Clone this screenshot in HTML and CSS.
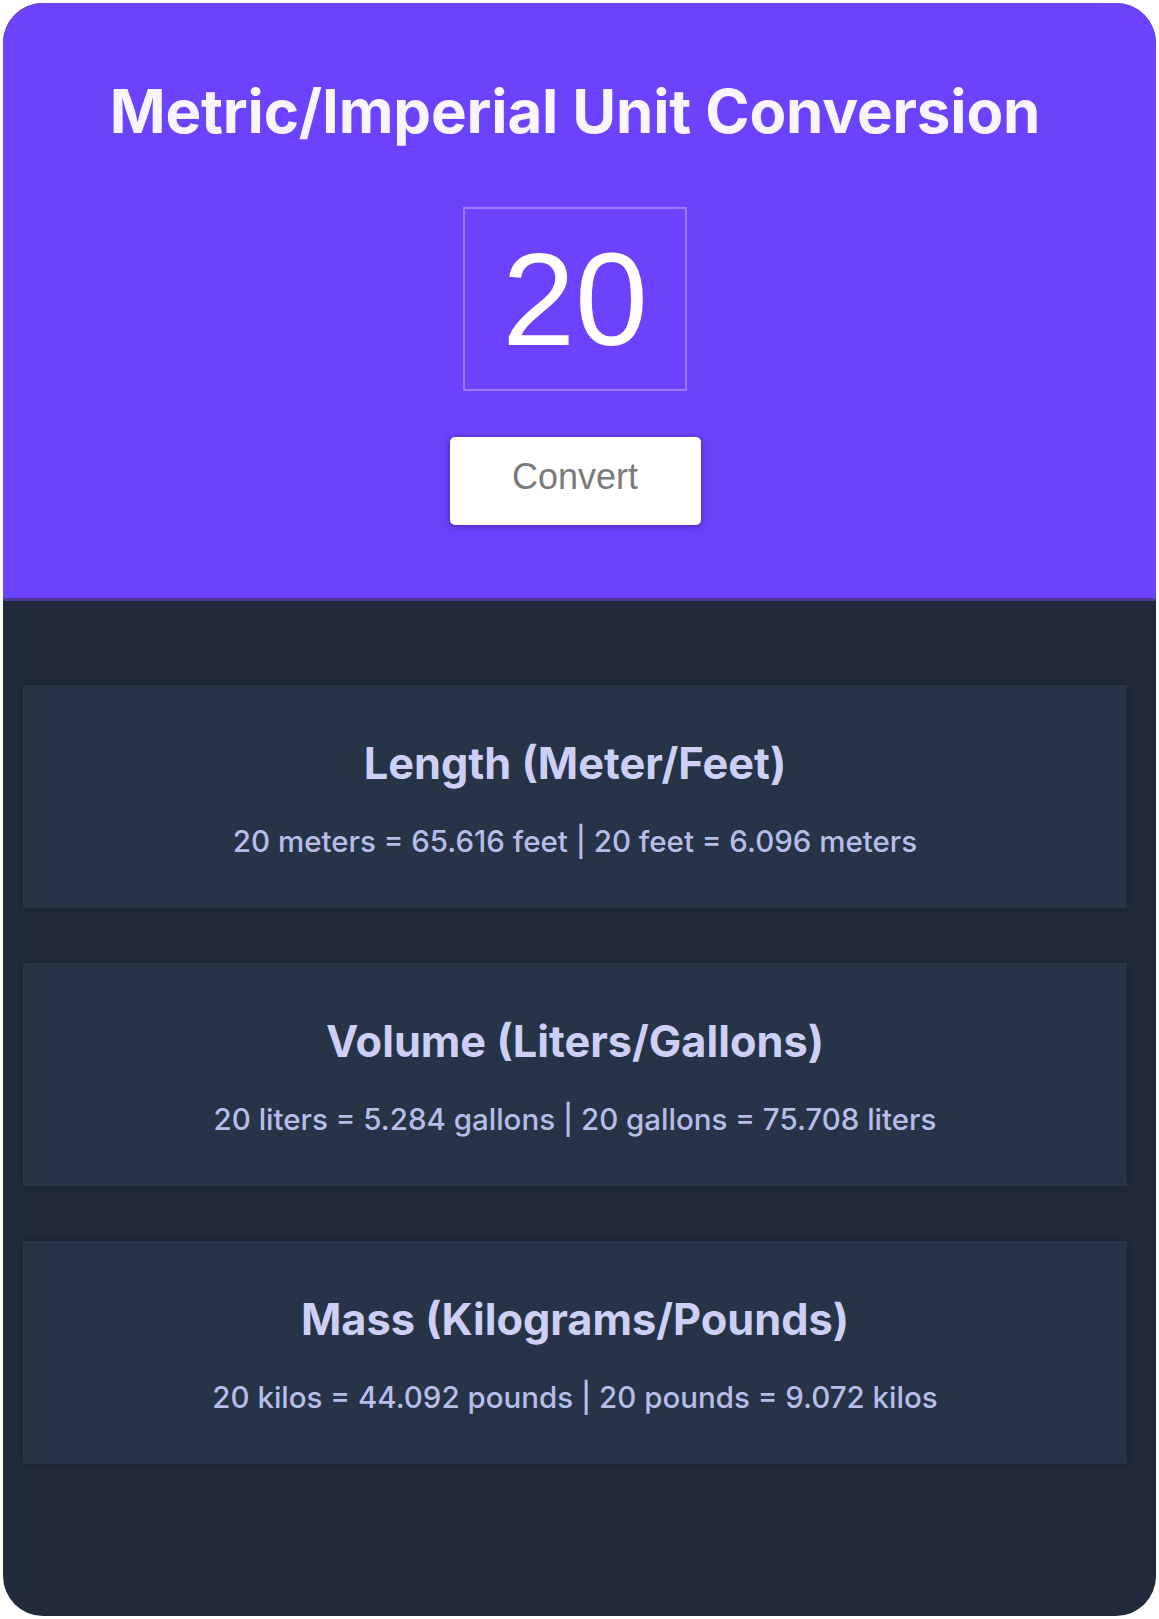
FILE: index.html
```html
<!DOCTYPE html>
<html lang="en">
<head>
<meta charset="utf-8">
<title>Metric/Imperial Unit Conversion</title>
<link rel="stylesheet" href="styles.css">
</head>
<body>
  <div class="app">
    <header class="hero">
      <h1 class="hero-title">Metric/Imperial Unit Conversion</h1>
      <input class="amount" type="text" value="20">
      <button class="convert-btn" type="button">Convert</button>
    </header>
    <main class="results">
      <section class="result-card">
        <h2 class="result-title">Length (Meter/Feet)</h2>
        <p class="result-text">20 meters = 65.616 feet | 20 feet = 6.096 meters</p>
      </section>
      <section class="result-card">
        <h2 class="result-title">Volume (Liters/Gallons)</h2>
        <p class="result-text">20 liters = 5.284 gallons | 20 gallons = 75.708 liters</p>
      </section>
      <section class="result-card">
        <h2 class="result-title">Mass (Kilograms/Pounds)</h2>
        <p class="result-text">20 kilos = 44.092 pounds | 20 pounds = 9.072 kilos</p>
      </section>
    </main>
  </div>
</body>
</html>
```

FILE: styles.css
```css
* { box-sizing: border-box; }

html, body {
  margin: 0;
  padding: 0;
  background: #ffffff;
}

body {
  padding: 3px;
  font-family: Inter, "Noto Sans", "DejaVu Sans", sans-serif;
}

.app {
  width: 1153px;
  height: 1613px;
  border-radius: 40px;
  overflow: hidden;
  background: #212a3a;
  display: flex;
  flex-direction: column;
}

.hero {
  background: #6b43fd;
  border-bottom: 3px solid #4b3a9a;
  padding: 72px 9px 73px 0;
  display: flex;
  flex-direction: column;
  align-items: center;
}

.hero-title {
  margin: 0;
  font-size: 60px;
  line-height: 72px;
  font-weight: 700;
  color: #f7f5ff;
  letter-spacing: -0.15px;
}

.amount {
  margin-top: 60px;
  width: 224px;
  height: 184px;
  border: 2px solid rgba(255, 255, 255, 0.3);
  background: transparent;
  color: #ffffff;
  font-family: "Liberation Sans", Arial, sans-serif;
  font-size: 131px;
  text-align: center;
  padding: 0;
  outline: none;
}

.convert-btn {
  margin-top: 46px;
  width: 251px;
  height: 88px;
  padding: 0 0 9px;
  background: #ffffff;
  border: none;
  border-radius: 5px;
  box-shadow: 0 1px 7px rgba(30, 15, 90, 0.55);
  color: #7a7a7a;
  font-family: "Liberation Sans", Arial, sans-serif;
  font-size: 36px;
}

.results {
  flex: 1;
  padding: 84px 29px 0 20px;
  display: flex;
  flex-direction: column;
  gap: 55px;
}

.result-card {
  background: #273346;
  box-shadow: 0 0 8px rgba(10, 15, 25, 0.35);
  padding: 53px 20px 49px;
  text-align: center;
}

.result-title {
  margin: 0;
  font-size: 43.3px;
  line-height: 50px;
  font-weight: 700;
  color: #cdcff7;
}

.result-text {
  margin: 35px 0 0;
  font-size: 29.5px;
  line-height: 36px;
  font-weight: 500;
  color: #b8bce8;
}
```
